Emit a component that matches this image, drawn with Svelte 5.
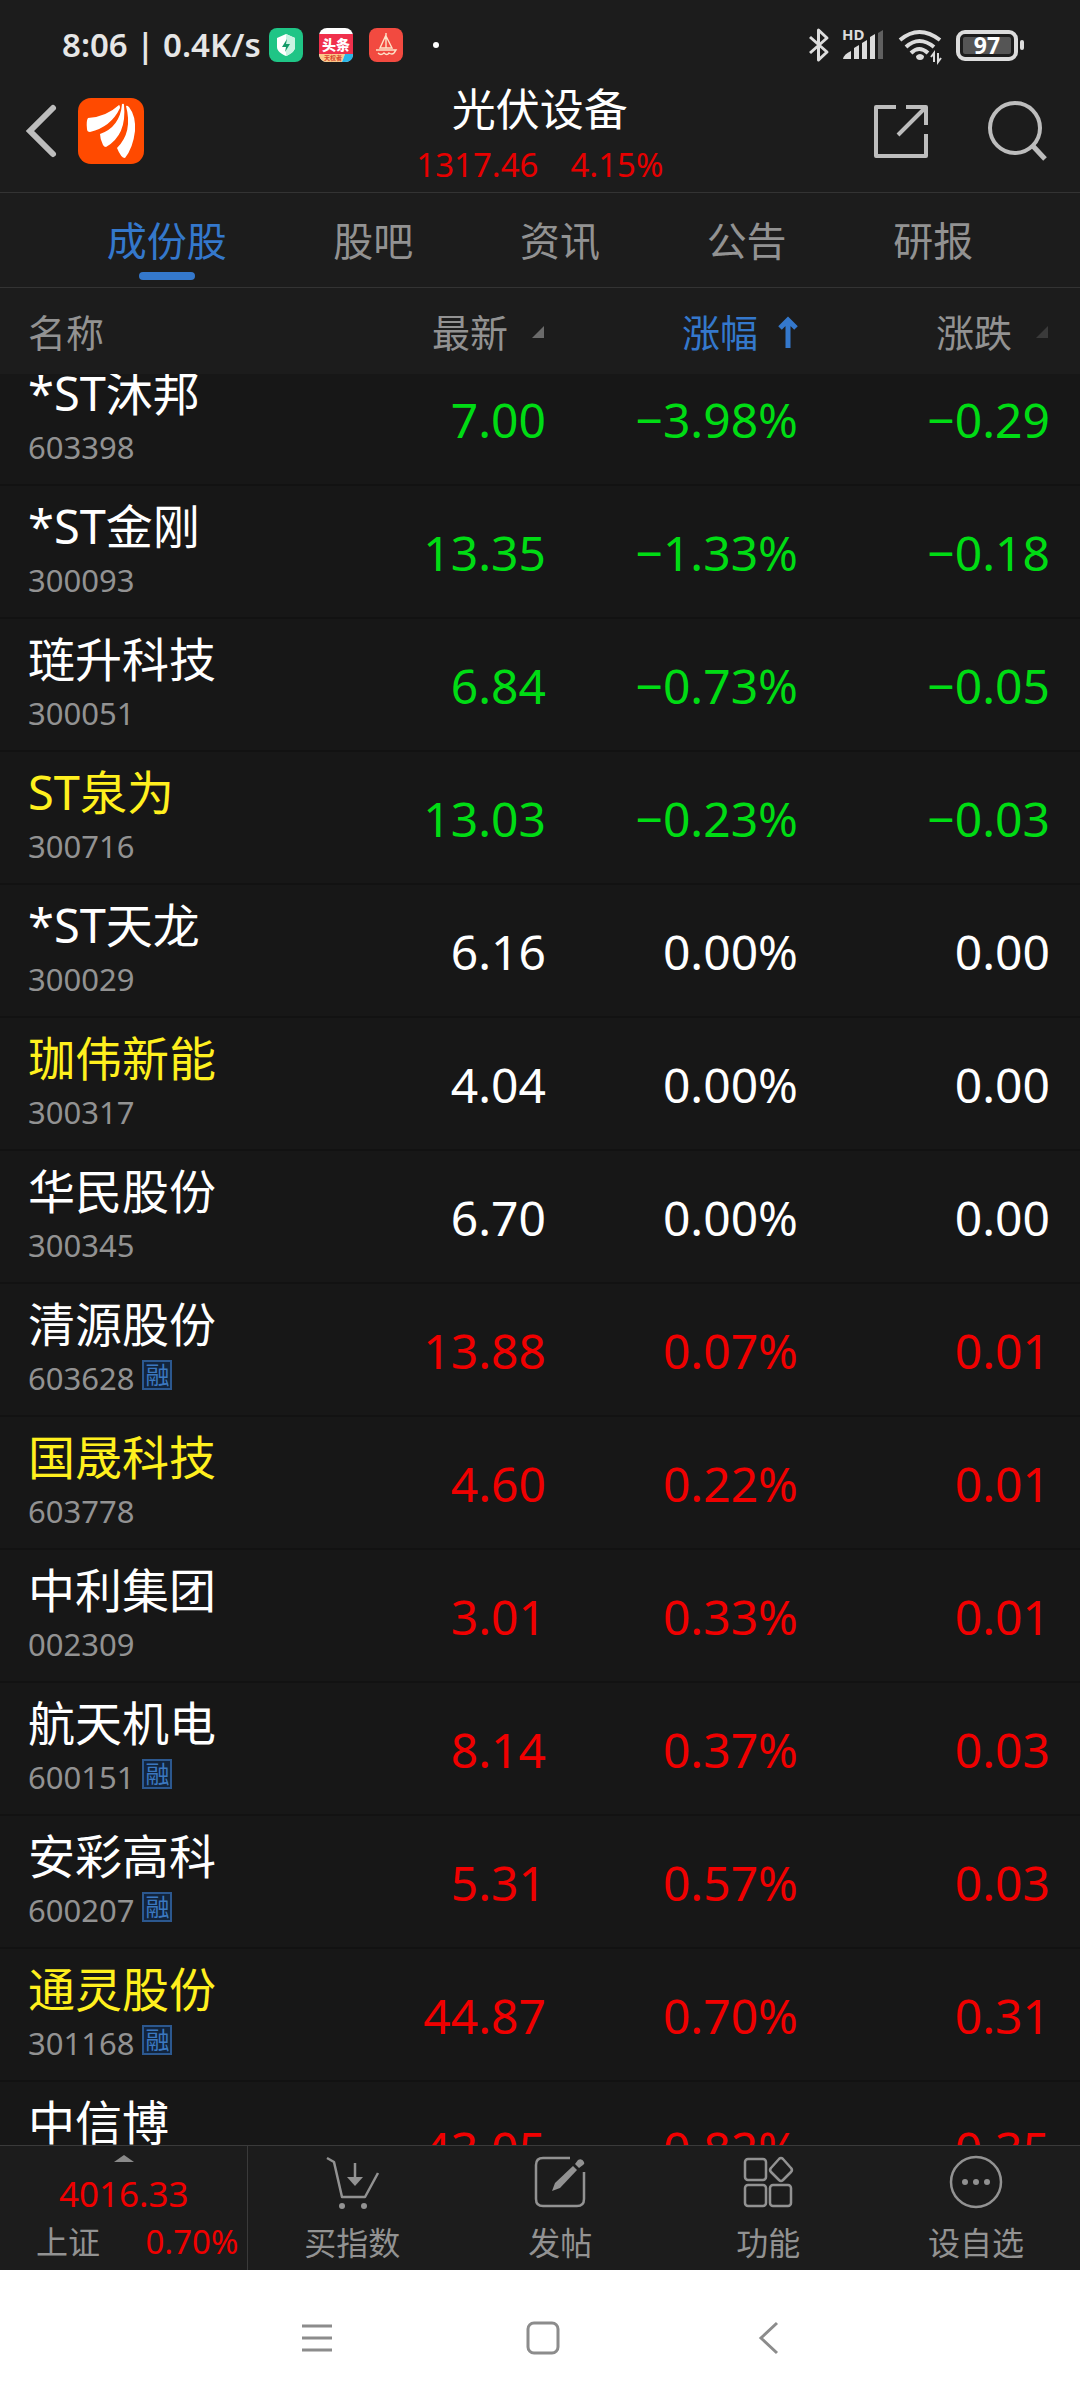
<script>
  import { onMount } from 'svelte'

  let activeTab = '成份股'
  let scroller

  const tabs = ['成份股', '股吧', '资讯', '公告', '研报']

  const stocks = [
    { name: '*ST沐邦', code: '603398', price: '7.00', pct: '−3.98%', diff: '−0.29' },
    { name: '*ST金刚', code: '300093', price: '13.35', pct: '−1.33%', diff: '−0.18' },
    { name: '琏升科技', code: '300051', price: '6.84', pct: '−0.73%', diff: '−0.05' },
    { name: 'ST泉为', code: '300716', price: '13.03', pct: '−0.23%', diff: '−0.03', own: true },
    { name: '*ST天龙', code: '300029', price: '6.16', pct: '0.00%', diff: '0.00' },
    { name: '珈伟新能', code: '300317', price: '4.04', pct: '0.00%', diff: '0.00', own: true },
    { name: '华民股份', code: '300345', price: '6.70', pct: '0.00%', diff: '0.00' },
    { name: '清源股份', code: '603628', price: '13.88', pct: '0.07%', diff: '0.01', margin: true },
    { name: '国晟科技', code: '603778', price: '4.60', pct: '0.22%', diff: '0.01', own: true },
    { name: '中利集团', code: '002309', price: '3.01', pct: '0.33%', diff: '0.01' },
    { name: '航天机电', code: '600151', price: '8.14', pct: '0.37%', diff: '0.03', margin: true },
    { name: '安彩高科', code: '600207', price: '5.31', pct: '0.57%', diff: '0.03', margin: true },
    { name: '通灵股份', code: '301168', price: '44.87', pct: '0.70%', diff: '0.31', margin: true, own: true },
    { name: '中信博', code: '688408', price: '43.05', pct: '0.82%', diff: '0.35' },
  ]

  function trend(diff) {
    if (diff.startsWith('−')) return 'down'
    return diff === '0.00' ? 'flat' : 'up'
  }

  onMount(() => {
    scroller.scrollTop = 21
  })
</script>

<div class="page">
  <div class="status">
    <span class="clock">8:06 | 0.4K/s</span>
    <svg class="app" viewBox="0 0 34 34" aria-hidden="true">
      <rect width="34" height="34" rx="8" fill="#1fc586" />
      <path d="M17 6l9 4v9c0 4-4 7-9 9-5-2-9-5-9-9v-9z" fill="#fff" />
      <path d="M17 6l9 4v9c0 4-4 7-9 9z" fill="#c9f3e2" />
      <path d="M18 11l-5 8h4l-1 5 5-8h-4z" fill="#149a68" />
    </svg>
    <svg class="app" viewBox="0 0 34 34" aria-hidden="true">
      <rect width="34" height="34" rx="8" fill="#fff" />
      <path d="M0 6h34v20H0z" fill="#f0304c" />
      <path d="M0 26h26l-3 8H8q-7 0-8-8z" fill="#fbc98a" />
      <path d="M26 26h8q0 8-8 8h-3z" fill="#27b6e8" />
      <text x="17" y="22" text-anchor="middle" font-size="14" font-weight="900" fill="#fff">头条</text>
      <text x="14" y="32" text-anchor="middle" font-size="6" font-weight="700" fill="#d8452c">天权者</text>
    </svg>
    <svg class="app" viewBox="0 0 34 34" aria-hidden="true">
      <rect width="34" height="34" rx="8" fill="#f24a40" />
      <path d="M17 5v15M17 7l-6 13h12L17 8M7 22h20l-2 3M9 25q3 3 6 0 3 3 5 0 3 2 5 0" fill="none" stroke="#fde3c8" stroke-width="1.4" />
    </svg>
    <span class="dot"></span>
    <span class="spacer"></span>
    <svg class="bt" viewBox="0 0 22 34" aria-hidden="true">
      <path d="M2 9l17 15-8.500 8V2l8.500 8L2 25" fill="none" stroke="#dcdcdc" stroke-width="3" stroke-linejoin="round" />
    </svg>
    <svg class="signal" viewBox="0 0 42 34" aria-hidden="true">
      <text x="0" y="12" font-size="15" font-weight="700" fill="#dcdcdc">HD</text>
      <path d="M1 31q1-5 8-8v8zM12 20l5-3v14h-5zM20 15l5-3v19h-5zM28 9l5-3v25h-5z" fill="#dcdcdc" />
      <path d="M36 5l5-3v29h-5z" fill="#606060" />
    </svg>
    <svg class="wifi" viewBox="0 0 44 34" aria-hidden="true">
      <g fill="none" stroke="#dcdcdc" stroke-width="4">
        <path d="M2 12q19-16 40 0M8 19q13-12 28 0M13 25q8-8 17 0" />
      </g>
      <path d="M18 28q4-4 8 0 0 4-4 4t-4-4z" fill="#dcdcdc" />
      <path d="M36 34v-9l-3 4M40 25v9l3-4" fill="none" stroke="#dcdcdc" stroke-width="2" />
    </svg>
    <svg class="battery" viewBox="0 0 70 32" aria-hidden="true">
      <rect x="2" y="3" width="58" height="27" rx="7" fill="none" stroke="#dcdcdc" stroke-width="4" />
      <rect x="7" y="8" width="48" height="17" rx="2" fill="#555" />
      <rect x="64" y="11" width="4" height="10" rx="2" fill="#dcdcdc" />
      <text x="31" y="25" text-anchor="middle" font-size="23" font-weight="700" fill="#fff">97</text>
    </svg>
  </div>

  <header>
    <div class="side">
      <button class="back" aria-label="返回">
        <svg viewBox="0 0 30 52"><path d="M27 3L4 26l23 23" fill="none" stroke="#bdbdbd" stroke-width="6" stroke-linecap="round" /></svg>
      </button>
      <svg class="logo" viewBox="0 0 66 66" aria-hidden="true">
        <rect width="66" height="66" rx="13" fill="#ff4a00" />
        <path d="M10 20Q28 19 41 7q1 0 1 3Q33 29 12 34q-3 0-3-3-1-8 1-11z" fill="#fff" />
        <path d="M44 6q2-1 2 1 3 30-18 42-2 0-3-2-3-6-3-11Q42 29 44 6z" fill="#fff" />
        <path d="M48 8q1-1 3 1 7 9 6 24-2 17-10 27-4 0-8-10Q55 34 48 8z" fill="#fff" />
      </svg>
    </div>
    <div class="heading">
      <h1>光伏设备</h1>
      <p><span>1317.46</span><span>4.15%</span></p>
    </div>
    <div class="side end">
      <button aria-label="分享">
        <svg class="share" viewBox="0 0 54 54"><path d="M22 3H2v49h50V30M32 3h20v18M52 3L24 31" fill="none" stroke="#bdbdbd" stroke-width="4" stroke-linejoin="round" /></svg>
      </button>
      <button aria-label="搜索">
        <svg class="search" viewBox="0 0 60 60"><circle cx="27" cy="27" r="25" fill="none" stroke="#bdbdbd" stroke-width="4" /><path d="M44 44l13 14" stroke="#bdbdbd" stroke-width="5" /></svg>
      </button>
    </div>
  </header>

  <nav class="tabs">
    {#each tabs as tab}
      <button class:active={tab === activeTab} on:click={() => (activeTab = tab)}>{tab}</button>
    {/each}
  </nav>

  <main bind:this={scroller}>
    <table>
      <thead>
        <tr>
          <th class="name">名称</th>
          <th><button>最新<svg class="tri" viewBox="0 0 12 12"><path d="M12 0v12H0z" fill="#6a6a6a" /></svg></button></th>
          <th><button class="sorted">涨幅<svg class="arrow" viewBox="0 0 20 32"><path d="M10 32V4M2 12l8-8 8 8" fill="none" stroke="#3478cc" stroke-width="5" /></svg></button></th>
          <th><button>涨跌<svg class="tri" viewBox="0 0 12 12"><path d="M12 0v12H0z" fill="#3a3a3a" /></svg></button></th>
        </tr>
      </thead>
      <tbody>
        {#each stocks as s}
          <tr class={trend(s.diff)}>
            <td class="name">
              <div class="title" class:own={s.own}>{s.name}</div>
              <div class="code">{s.code}{#if s.margin}<span class="badge">融</span>{/if}</div>
            </td>
            <td>{s.price}</td>
            <td>{s.pct}</td>
            <td>{s.diff}</td>
          </tr>
        {/each}
      </tbody>
    </table>
  </main>

  <footer>
    <button class="index">
      <svg class="up-mark" viewBox="0 0 20 7"><path d="M10 0l10 7H0z" fill="#8a8a8a" /></svg>
      <span class="value">4016.33</span>
      <span class="line"><span>上证</span><span class="change">0.70%</span></span>
    </button>
    <button class="action">
      <svg viewBox="0 0 54 54" fill="none" stroke="#929292" stroke-width="2.500">
        <path d="M2 3l7 4 8 35h23l13-24" stroke-linejoin="round" />
        <path d="M30 8v16" />
        <path d="M22 22h16l-8 9z" fill="#929292" stroke="none" />
        <circle cx="17" cy="51" r="3" fill="#929292" stroke="none" />
        <circle cx="39" cy="51" r="3" fill="#929292" stroke="none" />
      </svg>
      买指数
    </button>
    <button class="action">
      <svg viewBox="0 0 54 54" fill="none" stroke="#929292" stroke-width="2.500">
        <path d="M37 3H10Q3 3 3 10v34q0 7 7 7h34q7 0 7-7V17" />
        <path d="M19 36l3-8 18-17 4 4-17 18z" fill="#929292" stroke="none" />
        <path d="M42 9l3-4q4-2 6 2 1 2-1 3l-4 3z" fill="#929292" stroke="none" />
      </svg>
      发帖
    </button>
    <button class="action">
      <svg viewBox="0 0 54 54" fill="none" stroke="#929292" stroke-width="2.500">
        <rect x="4" y="4" width="21" height="21" rx="3" />
        <rect x="4" y="30" width="21" height="21" rx="3" />
        <rect x="29" y="30" width="21" height="21" rx="3" />
        <path d="M38 4q2-2 4 0l8 9q2 2 0 4l-8 8q-2 2-4 0l-8-8q-2-2 0-4z" />
      </svg>
      功能
    </button>
    <button class="action">
      <svg viewBox="0 0 54 54" fill="none" stroke="#929292" stroke-width="2.500">
        <circle cx="27" cy="27" r="25" />
        <g fill="#929292" stroke="none"><circle cx="16" cy="27" r="3" /><circle cx="27" cy="27" r="3" /><circle cx="38" cy="27" r="3" /></g>
      </svg>
      设自选
    </button>
  </footer>

  <div class="system">
    <button aria-label="菜单"><svg viewBox="0 0 34 34"><path d="M2 5h30M2 17h30M2 29h30" /></svg></button>
    <button aria-label="主页"><svg viewBox="0 0 34 34"><rect x="2" y="2" width="30" height="30" rx="6" /></svg></button>
    <button aria-label="后退"><svg viewBox="0 0 34 34"><path d="M25 2L9 17l16 15" /></svg></button>
  </div>
</div>

<style>
  :global(body) {
    margin: 0;
    background: #1c1c1c;
  }
  .page {
    display: flex;
    flex-direction: column;
    height: 100vh;
    background: #1c1c1c;
    color: #929292;
    font-family: 'Noto Sans', 'Noto Sans CJK SC', sans-serif;
  }
  button {
    background: none;
    border: none;
    padding: 0;
    margin: 0;
    color: inherit;
    font: inherit;
    cursor: pointer;
  }
  svg {
    display: block;
    flex-shrink: 0;
    overflow: visible;
  }

  .status {
    display: flex;
    align-items: center;
    height: 34px;
    padding: 28px 54px 16px 62px;
  }
  .clock {
    margin-right: 8px;
    font-size: 33px;
    line-height: 34px;
    font-weight: 600;
    color: #e6e6e6;
    white-space: nowrap;
  }
  .app {
    width: 34px;
    height: 34px;
    margin-right: 16px;
  }
  .dot {
    width: 6px;
    height: 6px;
    margin-left: 14px;
    border-radius: 50%;
    background: #fff;
  }
  .spacer {
    flex: 1;
  }
  .bt {
    width: 22px;
    height: 34px;
    margin-right: 12px;
  }
  .signal {
    width: 42px;
    height: 34px;
    margin-right: 14px;
  }
  .wifi {
    width: 44px;
    height: 34px;
    margin-right: 14px;
  }
  .battery {
    width: 70px;
    height: 32px;
  }

  header {
    display: flex;
    justify-content: space-between;
    align-items: center;
    height: 114px;
    padding: 0 26px;
    border-bottom: 1px solid #333;
  }
  .side {
    display: flex;
    align-items: center;
    box-sizing: border-box;
    width: 40%;
    gap: 22px;
    padding-bottom: 8px;
  }
  .end {
    justify-content: flex-end;
    gap: 60px;
    padding-right: 6px;
  }
  .back svg {
    width: 30px;
    height: 52px;
  }
  .logo {
    width: 66px;
    height: 66px;
  }
  .share {
    width: 54px;
    height: 54px;
  }
  .search {
    width: 60px;
    height: 60px;
  }
  .heading {
    flex-shrink: 0;
    text-align: center;
  }
  h1 {
    margin: 0;
    font-size: 44px;
    line-height: 56px;
    font-weight: 400;
    color: #fff;
  }
  .heading p {
    display: flex;
    gap: 32px;
    margin: 4px 0 0;
    font-size: 33px;
    line-height: 48px;
    color: #e60000;
  }

  .tabs {
    display: flex;
    justify-content: space-evenly;
    height: 94px;
    border-bottom: 1px solid #333;
  }
  .tabs button {
    position: relative;
    padding-top: 2px;
    font-size: 40px;
    line-height: 92px;
  }
  .tabs .active {
    color: #3478cc;
  }
  .tabs .active::after {
    content: '';
    position: absolute;
    left: 50%;
    bottom: 7px;
    width: 56px;
    height: 8px;
    margin-left: -28px;
    border-radius: 4px;
    background: #3478cc;
  }

  main {
    flex: 1;
    min-height: 0;
    overflow-y: auto;
    scrollbar-width: none;
    background: #171717;
  }
  table {
    width: 100%;
    table-layout: fixed;
    border-collapse: separate;
    border-spacing: 0;
  }
  th,
  td {
    box-sizing: border-box;
    padding: 1px 30px 0 0;
    text-align: right;
  }
  th {
    position: sticky;
    top: 0;
    z-index: 1;
    height: 86px;
    background: #1c1c1c;
    font-size: 38px;
    line-height: 56px;
    font-weight: 400;
  }
  th button {
    display: inline-flex;
    align-items: center;
    gap: 20px;
  }
  .sorted {
    color: #3478cc;
  }
  .tri {
    width: 12px;
    height: 12px;
    margin: 0 2px 0 4px;
  }
  .arrow {
    width: 20px;
    height: 32px;
  }
  td {
    height: 133px;
    border-bottom: 2px solid #121212;
    font-size: 48px;
  }
  .name {
    width: 30%;
    padding-left: 28px;
    padding-right: 0;
    text-align: left;
  }
  td.name {
    padding-bottom: 6px;
  }
  .title {
    font-size: 47px;
    line-height: 56px;
    color: #fff;
    white-space: nowrap;
  }
  .title.own {
    color: #fff01e;
  }
  .code {
    display: flex;
    align-items: center;
    gap: 8px;
    font-size: 31px;
    line-height: 40px;
    margin-top: 6px;
  }
  .badge {
    width: 26px;
    height: 26px;
    margin-bottom: 6px;
    border: 2px solid #2c588f;
    background: #12243c;
    color: #3b78c0;
    font-size: 24px;
    line-height: 26px;
    text-align: center;
  }
  .down {
    color: #00dc14;
  }
  .flat {
    color: #fff;
  }
  .up {
    color: #f00000;
  }
  td .code {
    color: #929292;
  }

  footer {
    display: flex;
    height: 124px;
    border-top: 1px solid #3a3a3a;
    font-size: 32px;
  }
  .index,
  .action {
    display: flex;
    flex-direction: column;
    align-items: center;
    padding-top: 9px;
  }
  .index {
    width: 23%;
    border-right: 1px solid #3a3a3a;
  }
  .up-mark {
    width: 20px;
    height: 7px;
    margin-bottom: 8px;
  }
  .value {
    font-size: 35px;
    line-height: 48px;
    color: #f00000;
  }
  .change {
    font-size: 33px;
    color: #f00000;
  }
  .line {
    display: flex;
    align-items: center;
    justify-content: space-between;
    align-self: stretch;
    padding: 0 9px 0 36px;
    line-height: 48px;
  }
  .action {
    flex: 1;
    gap: 12px;
    line-height: 44px;
  }
  .action svg {
    width: 54px;
    height: 54px;
  }

  .system {
    display: flex;
    justify-content: center;
    align-items: center;
    gap: 192px;
    box-sizing: border-box;
    height: 130px;
    padding: 6px 0 0 6px;
    background: #fff;
  }
  .system svg {
    width: 34px;
    height: 34px;
    fill: none;
    stroke: #8c8c8c;
    stroke-width: 3;
  }
</style>
